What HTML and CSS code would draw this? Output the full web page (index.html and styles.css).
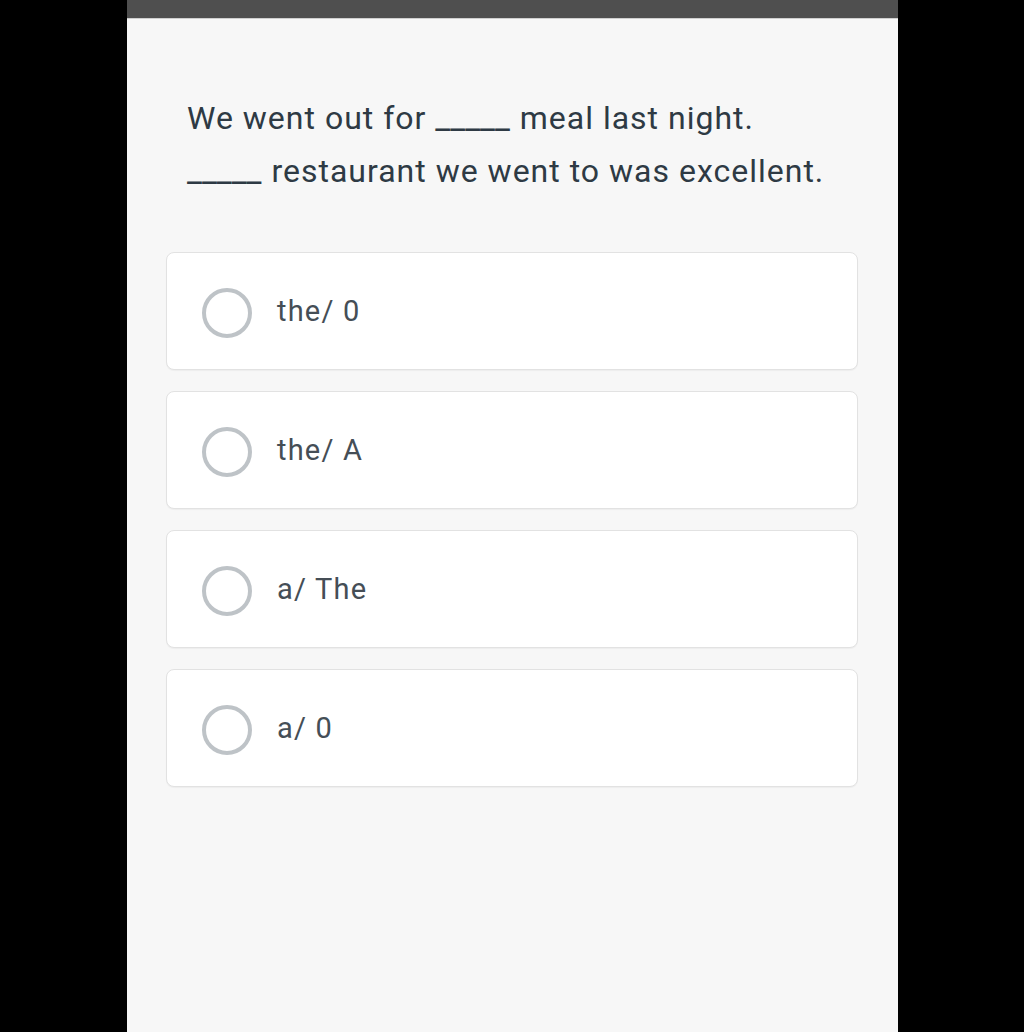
FILE: index.html
```html
<!DOCTYPE html>
<html>
<head>
<meta charset="utf-8">
<link rel="stylesheet" href="styles.css">
</head>
<body>
<div class="panel">
  <div class="topbar"></div>
  <div class="content">
    <p class="question">We went out for <span class="blank">_____</span> meal last night.<br><span class="blank">_____</span> restaurant we went to was excellent.</p>
    <div class="options">
      <div class="option"><span class="radio"></span><span class="label">the/ 0</span></div>
      <div class="option"><span class="radio"></span><span class="label">the/ A</span></div>
      <div class="option"><span class="radio"></span><span class="label">a/ The</span></div>
      <div class="option"><span class="radio"></span><span class="label">a/ 0</span></div>
    </div>
  </div>
</div>
</body>
</html>
```
FILE: styles.css
```css
html, body { margin: 0; padding: 0; }
body { background: #000; font-family: Roboto, "Noto Sans", sans-serif; }
.panel {
  width: 771px;
  height: 1032px;
  margin: 0 auto 0 127px;
  background: #f7f7f7;
}
.topbar {
  height: 19px;
  background: #4f4f4f;
  border-bottom: 1px solid #cfcfcf;
  box-sizing: border-box;
}
.content { padding: 73px 40px 0 39px; }
.question {
  margin: 0 0 54px 21px;
  font-size: 32px;
  letter-spacing: 1px;
  line-height: 53px;
  color: #2e3a44;
}
.blank { font-size: 33px; letter-spacing: 0; margin-right: 1px; line-height: 0; }
.options { display: flex; flex-direction: column; gap: 21px; }
.option {
  height: 118px;
  box-sizing: border-box;
  background: #fff;
  border: 1px solid #e2e2e2;
  border-radius: 8px;
  box-shadow: 0 1px 1px rgba(0,0,0,0.04);
  display: flex;
  align-items: center;
  padding-left: 35px;
}
.radio {
  width: 50px; height: 50px;
  box-sizing: border-box;
  border: 4px solid #bec3c7;
  border-radius: 50%;
  margin-right: 25px;
  margin-top: 4px;
}
.label { font-size: 29px; letter-spacing: 1.2px; color: #454e56; }
```
